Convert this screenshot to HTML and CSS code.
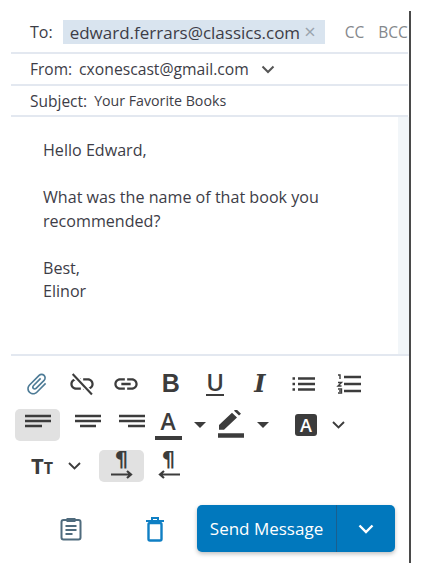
FILE: index.html
```html
<!DOCTYPE html>
<html lang="en">
<head>
<meta charset="utf-8"/>
<title>Compose</title>
<link rel="stylesheet" href="styles.css">
</head>
<body>
<main class="composer">
  <div class="field field-to">
    <span class="label label-to">To:</span>
    <span class="chip">edward.ferrars@classics.com<span class="chip-x">×</span></span>
    <span class="cc">CC</span>
    <span class="bcc">BCC</span>
  </div>
  <div class="field field-from">
    <span class="label">From:</span>
    <span class="value">cxonescast@gmail.com</span>
    <svg class="from-chevron" width="14" height="9" viewBox="0 0 14 9"><path d="M1.500 1.500 7 7l5.500-5.500" fill="none" stroke="#555" stroke-width="2"/></svg>
  </div>
  <div class="field field-subject">
    <span class="label">Subject:</span>
    <span class="subject">Your Favorite Books</span>
  </div>

  <div class="body-wrap">
    <div class="message">
      <p>Hello Edward,</p>
      <p>What was the name of that book you recommended?</p>
      <p>Best,<br>Elinor</p>
    </div>
    <div class="scrollbar"></div>
  </div>

  <div class="lower">
    <div class="toolbar">
      <div class="tool-row">
        <span class="tool"><svg width="26" height="26" viewBox="0 0 24 24"><path transform="rotate(45 12 12)" fill="#4d7b96" d="M16.500 6v11.500c0 2.210-1.790 4-4 4s-4-1.790-4-4V5c0-1.380 1.120-2.500 2.500-2.500s2.500 1.120 2.500 2.500v10.500c0 .55-.45 1-1 1s-1-.45-1-1V6H10v9.500c0 1.380 1.120 2.500 2.500 2.500s2.500-1.120 2.500-2.500V5c0-2.210-1.790-4-4-4S7 2.790 7 5v12.500c0 3.040 2.460 5.500 5.500 5.500s5.500-2.460 5.500-5.500V6h-1.500z"/></svg></span>
        <span class="tool"><svg width="28" height="28" viewBox="0 0 24 24"><path fill="#3c3c3c" d="M3.900 12c0-1.710 1.390-3.100 3.100-3.100h4V7H7c-2.760 0-5 2.240-5 5s2.240 5 5 5h4v-1.900H7c-1.710 0-3.100-1.390-3.100-3.100zM17 7h-4v1.900h4c1.710 0 3.100 1.390 3.100 3.100s-1.390 3.100-3.100 3.100h-4V17h4c2.760 0 5-2.240 5-5s-2.240-5-5-5z"/><path d="M4 3.500 20.500 21" stroke="#fff" stroke-width="4.500"/><path d="M4 3.500 20.500 21" stroke="#3c3c3c" stroke-width="1.800"/></svg></span>
        <span class="tool"><svg width="28" height="28" viewBox="0 0 24 24"><path fill="#3c3c3c" d="M3.900 12c0-1.710 1.390-3.100 3.100-3.100h4V7H7c-2.760 0-5 2.240-5 5s2.240 5 5 5h4v-1.900H7c-1.710 0-3.100-1.390-3.100-3.100zM8 13h8v-2H8v2zm9-6h-4v1.900h4c1.710 0 3.100 1.390 3.100 3.100s-1.390 3.100-3.100 3.100h-4V17h4c2.760 0 5-2.240 5-5s-2.240-5-5-5z"/></svg></span>
        <span class="tool"><span class="glyph-b">B</span></span>
        <span class="tool"><span class="glyph-u">U</span></span>
        <span class="tool"><span class="glyph-i">I</span></span>
        <span class="tool"><svg width="26" height="18" viewBox="0 0 26 18"><path d="M7 3.500h17M7 9h17M7 14.500h17" stroke="#3c3c3c" stroke-width="2.600"/><path d="M1.500 3.500h2.500M1.500 9h2.500M1.500 14.500h2.500" stroke="#3c3c3c" stroke-width="2.600"/></svg></span>
        <span class="tool"><svg width="26" height="22" viewBox="0 0 26 22"><path d="M8 4h17M8 11h17M8 18h17" stroke="#3c3c3c" stroke-width="2.600"/><path d="M2 2h2v4M2 9.500h3.500L2 13h3.500M2 16h3.500v4H2M3 18h2" fill="none" stroke="#3c3c3c" stroke-width="1.400"/></svg></span>
      </div>
      <div class="tool-row row-align">
        <span class="tool tool-left active"><svg class="align-icon" width="26" height="14" viewBox="0 0 26 14"><path d="M0 2h26M0 7h26M0 12h17" stroke="#3c3c3c" stroke-width="2.600"/></svg></span>
        <span class="tool tool-center"><svg class="align-icon" width="26" height="14" viewBox="0 0 26 14"><path d="M0 2h26M0 7h26M5 12h16" stroke="#3c3c3c" stroke-width="2.600"/></svg></span>
        <span class="tool tool-right"><svg class="align-icon" width="26" height="14" viewBox="0 0 26 14"><path d="M0 2h26M0 7h26M9 12h17" stroke="#3c3c3c" stroke-width="2.600"/></svg></span>
        <span class="tool tool-color"><span class="glyph-a">A</span></span>
        <span class="tool tool-caret"><span class="caret"></span></span>
        <span class="tool tool-pen"><svg width="28" height="29" viewBox="0 0 28 29"><path d="M3 19 16 6l5 5-13 13H3z M18 4l2-2 5 5-2 2z" fill="#3c3c3c" transform="translate(-1 -3) scale(1 .95)"/><path d="M1 25.500h26" stroke="#3c3c3c" stroke-width="4.500"/></svg></span>
        <span class="tool tool-caret"><span class="caret"></span></span>
        <span class="tool tool-box"><span class="glyph-box">A</span></span>
        <span class="tool tool-chevron"><svg width="13" height="8" viewBox="0 0 13 8"><path d="M1 1 6.500 6.500 12 1" fill="none" stroke="#3c3c3c" stroke-width="1.900"/></svg></span>
      </div>
      <div class="tool-row row-para">
        <span class="tool tool-size"><span class="glyph-big">T</span><span class="glyph-small">T</span></span>
        <span class="tool tool-chevron2"><svg width="13" height="8" viewBox="0 0 13 8"><path d="M1 1 6.500 6.500 12 1" fill="none" stroke="#3c3c3c" stroke-width="1.900"/></svg></span>
        <span class="tool tool-ltr active">
          <span class="glyph-para">¶</span>
          <svg class="para-arrow" width="22" height="9" viewBox="0 0 22 9"><path d="M0 4.500h20M16 1l4 3.500-4 3.500" fill="none" stroke="#3c3c3c" stroke-width="2.200"/></svg>
        </span>
        <span class="tool tool-rtl">
          <span class="glyph-para">¶</span>
          <svg class="para-arrow" width="22" height="9" viewBox="0 0 22 9"><path d="M22 4.500H2M6 1 2 4.500 6 8" fill="none" stroke="#3c3c3c" stroke-width="2.200"/></svg>
        </span>
      </div>
    </div>

    <div class="actions">
      <span class="action action-note"><svg width="22" height="24" viewBox="0 0 22 24"><rect x="1.500" y="3" width="19" height="19.500" rx="2" fill="none" stroke="#4f6b7d" stroke-width="2"/><rect x="6.500" y="1" width="9" height="4" fill="#4f6b7d"/><path d="M5.500 9h11M5.500 13h11M5.500 17h7" stroke="#4f6b7d" stroke-width="1.800"/></svg></span>
      <span class="action action-trash"><svg width="20" height="26" viewBox="0 0 20 26"><path d="M1 5h18M7 4V2h6v2" fill="none" stroke="#0f7fc4" stroke-width="2"/><rect x="3.500" y="7" width="13" height="17.500" rx="1.500" fill="none" stroke="#0f7fc4" stroke-width="2.400"/></svg></span>
      <div class="send">
        <span class="send-label">Send Message</span>
        <span class="send-more"><svg width="16" height="10" viewBox="0 0 16 10"><path d="M1.500 1.500 8 8l6.500-6.500" fill="none" stroke="#fff" stroke-width="2.400"/></svg></span>
      </div>
    </div>
  </div>
</main>
</body>
</html>
```

FILE: styles.css
```css
* {
  box-sizing: border-box;
}

body {
  margin: 0;
  background-color: #fff;
  font-family: "Open Sans", sans-serif;
  color: #3d3d47;
}

.composer {
  width: 411px;
  height: 552px;
  margin-top: 11px;
  padding-left: 11px;
  border-right: 2px solid #4a4a4a;
  display: flex;
  flex-direction: column;
}

.field {
  display: flex;
  align-items: center;
  margin-right: 1px;
  padding-left: 19px;
  border-bottom: 2px solid #e3e8f0;
}

.field-to {
  height: 43px;
  padding-top: 1px;
}

.field-from {
  height: 32px;
}

.field-subject {
  height: 31px;
}

.label {
  font-size: 15.500px;
}

.label-to {
  font-size: 16px;
}

.chip {
  margin-left: 10px;
  width: 262px;
  height: 24px;
  padding-left: 7px;
  display: flex;
  align-items: center;
  gap: 4px;
  background-color: #d9e4ef;
  font-size: 17px;
  white-space: pre;
}

.chip-x {
  color: #9aa3ad;
  font-size: 20px;
  line-height: 20px;
}

.cc,
.bcc {
  color: #85888c;
  font-size: 15.500px;
}

.cc {
  margin-left: 20px;
}

.bcc {
  margin-left: 14px;
}

.value {
  margin-left: 7px;
  font-size: 15.700px;
}

.from-chevron {
  margin-left: 12px;
}

.subject {
  margin-left: 7px;
  font-size: 14.200px;
}

.body-wrap {
  height: 239px;
  display: flex;
  border-bottom: 2px solid #e3e8f0;
}

.message {
  flex: 1;
  padding: 22px 60px 0 32px;
  font-size: 16.100px;
  line-height: 23.500px;
}

.message p {
  margin: 0 0 23.500px;
}

.scrollbar {
  width: 11px;
  background-color: #f2f6f9;
}

.lower {
  flex: 1;
  padding-top: 7px;
  padding-left: 4px;
  display: flex;
  flex-direction: column;
}

.tool-row {
  display: flex;
  align-items: center;
  height: 41px;
}

.tool {
  width: 44.500px;
  height: 32px;
  flex: none;
  display: flex;
  align-items: center;
  justify-content: center;
  position: relative;
  border-radius: 5px;
}

.active {
  background-color: #e1e1e1;
}

.align-icon {
  margin-bottom: 7px;
}

.glyph-b {
  font-family: "Liberation Sans", sans-serif;
  font-weight: 700;
  font-size: 25px;
  color: #3c3c3c;
}

.glyph-u {
  font-family: "Open Sans", sans-serif;
  font-weight: 600;
  font-size: 24px;
  line-height: 22px;
  height: 25px;
  color: #3c3c3c;
  border-bottom: 2px solid #3c3c3c;
}

.glyph-i {
  font-family: "DejaVu Serif", serif;
  font-weight: 700;
  font-style: italic;
  font-size: 24px;
  color: #3c3c3c;
}

.tool-left {
  width: 45px;
}

.tool-center {
  margin-left: 6px;
  width: 44px;
}

.tool-right {
  width: 44px;
}

.tool-color {
  width: 28px;
}

.glyph-a {
  font-weight: 600;
  font-size: 23px;
  line-height: 24px;
  height: 31px;
  width: 27px;
  text-align: center;
  color: #3c3c3c;
  border-bottom: 4px solid #3c3c3c;
}

.tool-caret {
  width: 20px;
  margin-left: 8px;
}

.caret {
  width: 0;
  height: 0;
  border-left: 6px solid transparent;
  border-right: 6px solid transparent;
  border-top: 6px solid #3c3c3c;
}

.tool-pen {
  width: 28px;
  margin-left: 7px;
}

.tool-pen + .tool-caret {
  margin-left: 8px;
}

.tool-box {
  width: 24px;
  margin-left: 21px;
}

.glyph-box {
  width: 22px;
  height: 22px;
  display: flex;
  align-items: center;
  justify-content: center;
  border-radius: 3px;
  background-color: #3c3c3c;
  color: #fff;
  font-size: 18px;
  font-weight: 600;
}

.tool-chevron {
  width: 22px;
  margin-left: 9px;
}

.tool-size {
  width: 26px;
  margin-left: 14px;
  color: #3c3c3c;
  font-weight: 700;
  align-items: baseline;
}

.glyph-big {
  font-size: 22px;
}

.glyph-small {
  font-size: 16px;
}

.tool-chevron2 {
  width: 22px;
  margin-left: 8px;
}

.tool-ltr {
  width: 45px;
  margin-left: 14px;
}

.tool-rtl {
  width: 45px;
  margin-left: 2px;
}

.tool-ltr,
.tool-rtl {
  flex-direction: column;
}

.glyph-para {
  font-family: "DejaVu Sans", sans-serif;
  font-weight: 700;
  font-size: 21px;
  line-height: 17px;
  color: #3c3c3c;
}

.para-arrow {
  margin-top: 1px;
}

.actions {
  margin-top: 19px;
  display: flex;
  align-items: center;
}

.action {
  display: flex;
  justify-content: center;
}

.action-note {
  width: 22px;
  margin-left: 45px;
}

.action-trash {
  width: 20px;
  margin-left: 63px;
}

.send {
  margin-left: 32px;
  width: 198px;
  height: 47px;
  display: flex;
  border-radius: 5px;
  background-color: #0178bd;
  box-shadow: 0 2px 4px rgba(0, 0, 0, 0.25);
  color: #fff;
}

.send-label {
  width: 140px;
  display: flex;
  align-items: center;
  justify-content: center;
  font-size: 17px;
  border-right: 1px solid #1a5f8e;
}

.send-more {
  flex: 1;
  display: flex;
  align-items: center;
  justify-content: center;
}
```
